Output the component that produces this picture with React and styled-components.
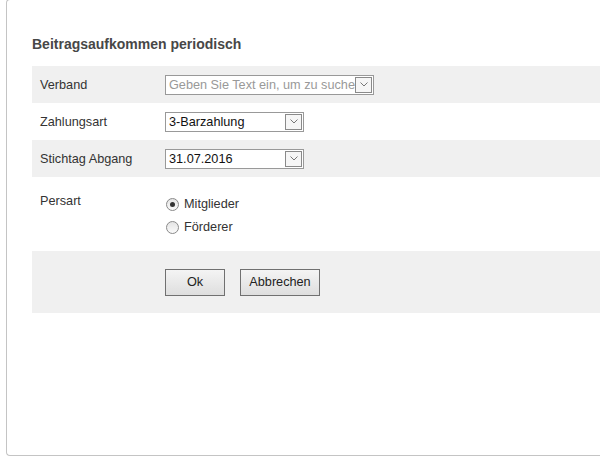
import React from 'react';
import styled, { createGlobalStyle } from 'styled-components';

const GlobalStyle = createGlobalStyle`
  body {
    margin: 0;
    background: #fff;
    font-family: 'Liberation Sans', Arial, sans-serif;
    overflow: hidden;
  }
`;

const Panel = styled.div`
  margin: -1px 0 0 6px;
  width: calc(100% - 6px);
  height: 457px;
  border: 1px solid #c4c4c4;
  border-right: none;
  border-radius: 4px 0 0 4px;
  background: #fff;
  padding: 0 0 0 25px;
  box-sizing: border-box;
`;

const Title = styled.h2`
  margin: 0;
  padding-top: 36px;
  height: 66px;
  box-sizing: border-box;
  font-size: 14px;
  font-weight: bold;
  color: #474747;
`;

const Row = styled.div`
  display: grid;
  grid-template-columns: 125px 1fr;
  align-items: ${props => (props.top ? 'start' : 'center')};
  height: ${props => props.height || 37}px;
  padding-left: 8px;
  background: ${props => (props.shaded ? '#f0f0f0' : '#fff')};
`;

const Label = styled.div`
  font-size: 12.7px;
  color: #333;
  padding-top: ${props => props.offset || 0}px;
`;

const Field = styled.div`
  display: flex;
  align-items: center;
  width: ${props => props.width}px;
  height: 20px;
  border: 1px solid #999;
  box-sizing: border-box;
  background: #fff;
  padding: 1px;
`;

const FieldText = styled.span`
  flex: 1;
  overflow: hidden;
  white-space: nowrap;
  font-size: 12.7px;
  padding-left: 2px;
  color: ${props => (props.placeholder ? '#999' : '#111')};
`;

const DropButton = styled.span`
  display: flex;
  align-items: center;
  justify-content: center;
  width: 17px;
  height: 16px;
  border: 1px solid #8a8a8a;
  box-sizing: border-box;
  background: #f6f6f6;
`;

const RadioList = styled.div`
  display: flex;
  flex-direction: column;
  gap: 9px;
  padding-top: 20px;
`;

const RadioItem = styled.label`
  display: flex;
  align-items: center;
  gap: 5px;
  font-size: 12.7px;
  color: #333;
`;

const RadioCircle = styled.span`
  display: flex;
  align-items: center;
  justify-content: center;
  width: 13px;
  height: 13px;
  margin-left: 1px;
  border: 1px solid #8a8a8a;
  border-radius: 50%;
  box-sizing: border-box;
  background: linear-gradient(#e4e4e4, #fafafa);
  &::after {
    content: '';
    width: 5px;
    height: 5px;
    border-radius: 50%;
    background: ${props => (props.checked ? '#333' : 'transparent')};
  }
`;

const ButtonBar = styled.div`
  display: flex;
  gap: 15px;
  height: 62px;
  align-items: center;
  padding-left: 133px;
  background: #f0f0f0;
`;

const Button = styled.button`
  height: 27px;
  width: ${props => props.width}px;
  border: 1px solid #707070;
  border-radius: 0;
  background: linear-gradient(#f4f4f4, #dedede);
  font-family: 'Liberation Sans', Arial, sans-serif;
  font-size: 12.7px;
  color: #222;
  padding: 0;
`;

const Chevron = () => (
  <svg width="8" height="5" viewBox="0 0 8 5">
    <path d="M0.5 0.5 L4 4 L7.5 0.5" fill="none" stroke="#777" strokeWidth="1" />
  </svg>
);

const Select = ({ width, text, placeholder }) => (
  <Field width={width}>
    <FieldText placeholder={placeholder ? 1 : 0}>{text}</FieldText>
    <DropButton>
      <Chevron />
    </DropButton>
  </Field>
);

export default function App() {
  return (
    <>
      <GlobalStyle />
      <Panel>
        <Title>Beitragsaufkommen periodisch</Title>
        <Row shaded>
          <Label>Verband</Label>
          <Select width={209} text="Geben Sie Text ein, um zu suchen" placeholder />
        </Row>
        <Row>
          <Label>Zahlungsart</Label>
          <Select width={139} text="3-Barzahlung" />
        </Row>
        <Row shaded>
          <Label>Stichtag Abgang</Label>
          <Select width={139} text="31.07.2016" />
        </Row>
        <Row top height={74}>
          <Label offset={17}>Persart</Label>
          <RadioList>
            <RadioItem>
              <RadioCircle checked />
              Mitglieder
            </RadioItem>
            <RadioItem>
              <RadioCircle />
              Förderer
            </RadioItem>
          </RadioList>
        </Row>
        <ButtonBar>
          <Button width={60}>Ok</Button>
          <Button width={80}>Abbrechen</Button>
        </ButtonBar>
      </Panel>
    </>
  );
}
